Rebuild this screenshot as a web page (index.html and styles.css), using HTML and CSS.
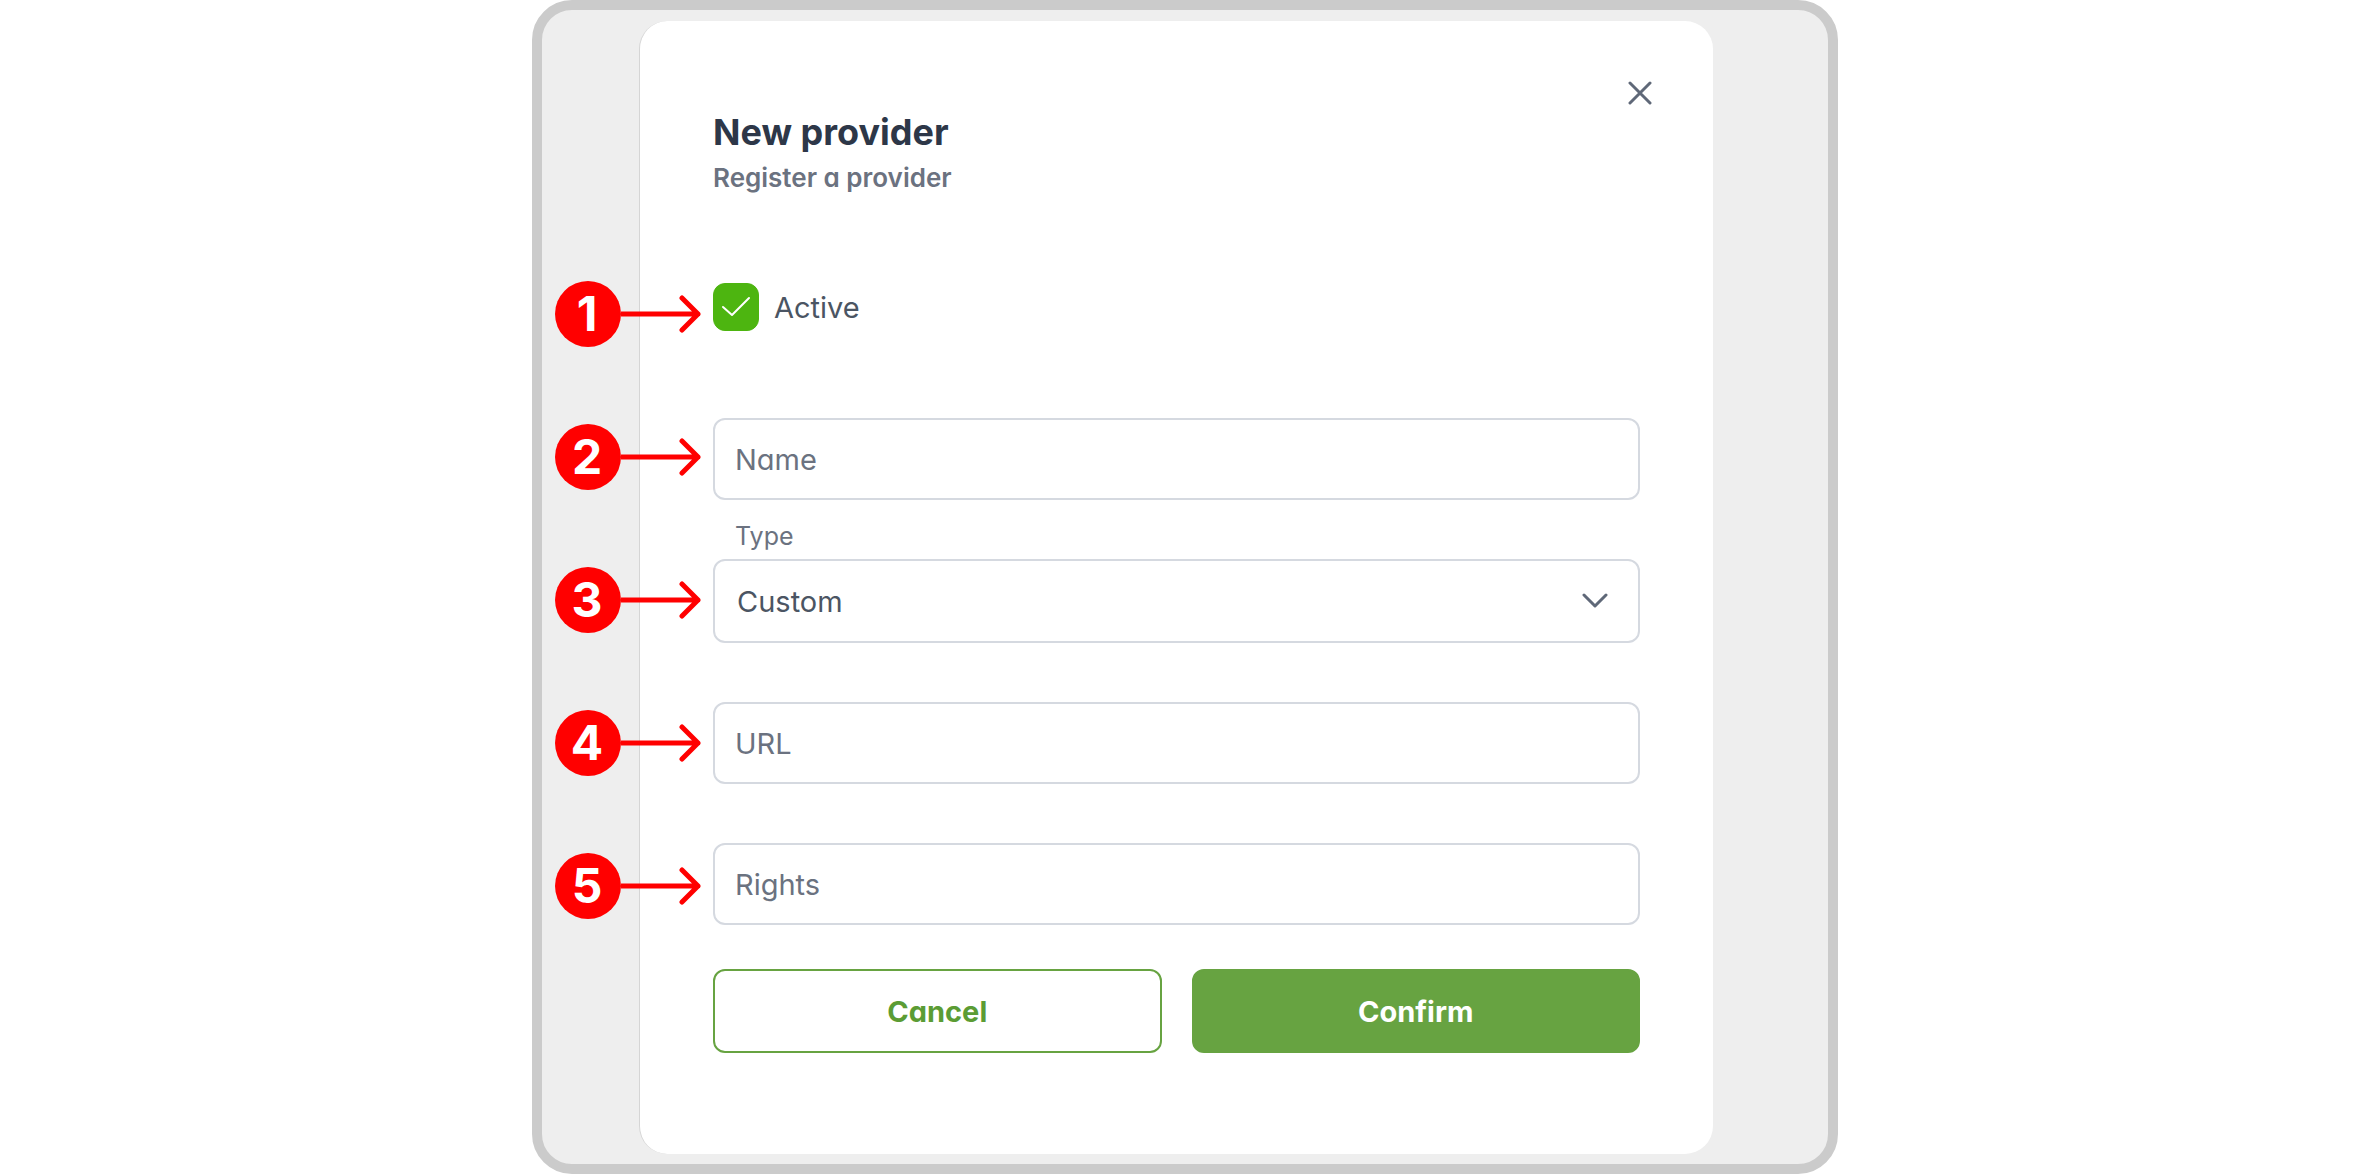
FILE: index.html
```html
<!DOCTYPE html>
<html lang="en">
<head>
  <meta charset="utf-8">
  <meta name="viewport" content="width=device-width, initial-scale=1">
  <title>New provider</title>
  <link rel="stylesheet" href="styles.css">
</head>
<body>
  <svg class="sprite" aria-hidden="true">
    <symbol id="arrow" viewBox="0 0 80 38">
      <path d="M0 19H77M61 3L77 19L61 35" fill="none" stroke="currentColor" stroke-width="5" stroke-linecap="round" stroke-linejoin="round"/>
    </symbol>
  </svg>
  <main class="frame">
    <section class="card" aria-labelledby="title">
      <header class="card-header">
        <div class="heading">
          <h1 class="title" id="title">New provider</h1>
          <p class="subtitle">Register a provider</p>
        </div>
        <button class="close" type="button" aria-label="Close">
          <svg width="24" height="24" viewBox="0 0 24 24" fill="none" stroke="currentColor" stroke-width="3" stroke-linecap="round"><path d="M2 2L22 22M22 2L2 22"/></svg>
        </button>
      </header>
      <form class="form">
        <label class="check">
          <input class="check-input" type="checkbox" checked>
          <svg class="check-mark" viewBox="0 0 46 48" fill="none" stroke="currentColor" stroke-width="2" stroke-linecap="round" stroke-linejoin="round"><path d="M10 24L19 32L36 15"/></svg>
          <span>Active</span>
        </label>
        <input class="control" type="text" placeholder="Name" aria-label="Name">
        <div class="field">
          <label class="field-label" for="type">Type</label>
          <div class="select-wrap">
            <select class="control select" id="type"><option>Custom</option></select>
            <svg class="chevron" viewBox="0 0 26 16" fill="none" stroke="currentColor" stroke-width="3" stroke-linecap="round" stroke-linejoin="round"><path d="M2 2L13 13L24 2"/></svg>
          </div>
        </div>
        <input class="control" type="text" placeholder="URL" aria-label="URL">
        <input class="control" type="text" placeholder="Rights" aria-label="Rights">
        <div class="actions">
          <button class="button" type="button">Cancel</button>
          <button class="button button-primary" type="submit">Confirm</button>
        </div>
      </form>
    </section>
    <ol class="markers">
      <li class="marker"><span class="number">1</span><svg class="arrow" aria-hidden="true"><use href="#arrow"/></svg></li>
      <li class="marker"><span class="number">2</span><svg class="arrow" aria-hidden="true"><use href="#arrow"/></svg></li>
      <li class="marker"><span class="number">3</span><svg class="arrow" aria-hidden="true"><use href="#arrow"/></svg></li>
      <li class="marker"><span class="number">4</span><svg class="arrow" aria-hidden="true"><use href="#arrow"/></svg></li>
      <li class="marker"><span class="number">5</span><svg class="arrow" aria-hidden="true"><use href="#arrow"/></svg></li>
    </ol>
  </main>
</body>
</html>
```
FILE: styles.css
```css
* {
  box-sizing: border-box;
}

body {
  margin: 0;
  background: #fff;
  color: #4b5563;
  font-family: Inter, "Liberation Sans", sans-serif;
  font-size: 29px;
  font-feature-settings: "cv11";
}

.sprite {
  position: absolute;
  width: 0;
  height: 0;
}

.frame {
  position: relative;
  max-width: 1306px;
  margin: 0 auto;
  padding: 11px 115px 10px 97px;
  border: 10px solid #cbcbcb;
  border-radius: 40px;
  background: #eee;
}

.card {
  padding: 52px 73px 101px;
  border-left: 1px solid #d5d5d5;
  border-radius: 28px;
  background: #fff;
}

.card-header {
  display: flex;
  justify-content: space-between;
  align-items: flex-start;
}

.heading {
  display: flex;
  flex-direction: column;
  gap: 8px;
  padding-top: 36px;
}

.title,
.subtitle {
  margin: 0;
}

.title {
  color: #2d3748;
  font-size: 36px;
  font-weight: 700;
  line-height: 46px;
}

.subtitle {
  color: #6b7280;
  font-size: 26px;
  font-weight: 600;
  line-height: 30px;
}

.close {
  display: grid;
  place-items: center;
  width: 40px;
  height: 40px;
  margin-right: -20px;
  padding: 0;
  border: 0;
  background: none;
  color: #5f6878;
}

.form {
  display: flex;
  flex-direction: column;
  gap: 59px;
  margin-top: 90px;
}

.check {
  display: grid;
  grid-template-columns: 46px auto;
  justify-content: start;
  align-items: center;
  column-gap: 15px;
  margin-bottom: 28px;
}

.check-input {
  grid-area: 1 / 1;
  appearance: none;
  width: 46px;
  height: 48px;
  margin: 0;
  border: 1px solid #4db510;
  border-radius: 12px;
}

.check-input:checked {
  background: #4db510;
}

.check-mark {
  grid-area: 1 / 1;
  width: 46px;
  height: 48px;
  color: #fff;
  pointer-events: none;
}

.control {
  display: block;
  width: 100%;
  height: 82px;
  padding: 0 20px;
  border: 2px solid #d5d9e0;
  border-radius: 12px;
  background: #fff;
  color: #4b5563;
  font: inherit;
  font-feature-settings: inherit;
}

.control::placeholder {
  color: #6b7280;
  opacity: 1;
}

.field {
  display: flex;
  flex-direction: column;
  gap: 8px;
  margin-top: -38px;
}

.field-label {
  padding-left: 22px;
  color: #6b7280;
  font-size: 25px;
  line-height: 30px;
}

.select-wrap {
  display: grid;
  align-items: center;
}

.select {
  grid-area: 1 / 1;
  appearance: none;
  height: 84px;
  padding: 0 22px;
}

.chevron {
  grid-area: 1 / 1;
  justify-self: end;
  width: 26px;
  height: 16px;
  margin-right: 32px;
  color: #5f6878;
  pointer-events: none;
}

.actions {
  display: grid;
  grid-template-columns: 1fr 1fr;
  gap: 30px;
  margin-top: -15px;
}

.button {
  height: 84px;
  padding: 0;
  border: 2px solid #67a341;
  border-radius: 12px;
  background: #fff;
  color: #5b9c34;
  font: inherit;
  font-feature-settings: inherit;
  font-weight: 700;
}

.button-primary {
  background: #67a341;
  color: #fff;
}

/* Numbered callouts laid over the dialog */
.markers {
  position: absolute;
  top: 271px;
  left: 13px;
  display: flex;
  flex-direction: column;
  gap: 77px;
  margin: 0;
  padding: 0;
  list-style: none;
}

.marker {
  display: flex;
  align-items: center;
  color: #f00;
}

.number {
  width: 66px;
  padding-right: 2px;
  border-radius: 50%;
  background: #f00;
  color: #fff;
  font-size: 48px;
  font-weight: 700;
  line-height: 66px;
  text-align: center;
}

.arrow {
  width: 80px;
  height: 38px;
}
```
